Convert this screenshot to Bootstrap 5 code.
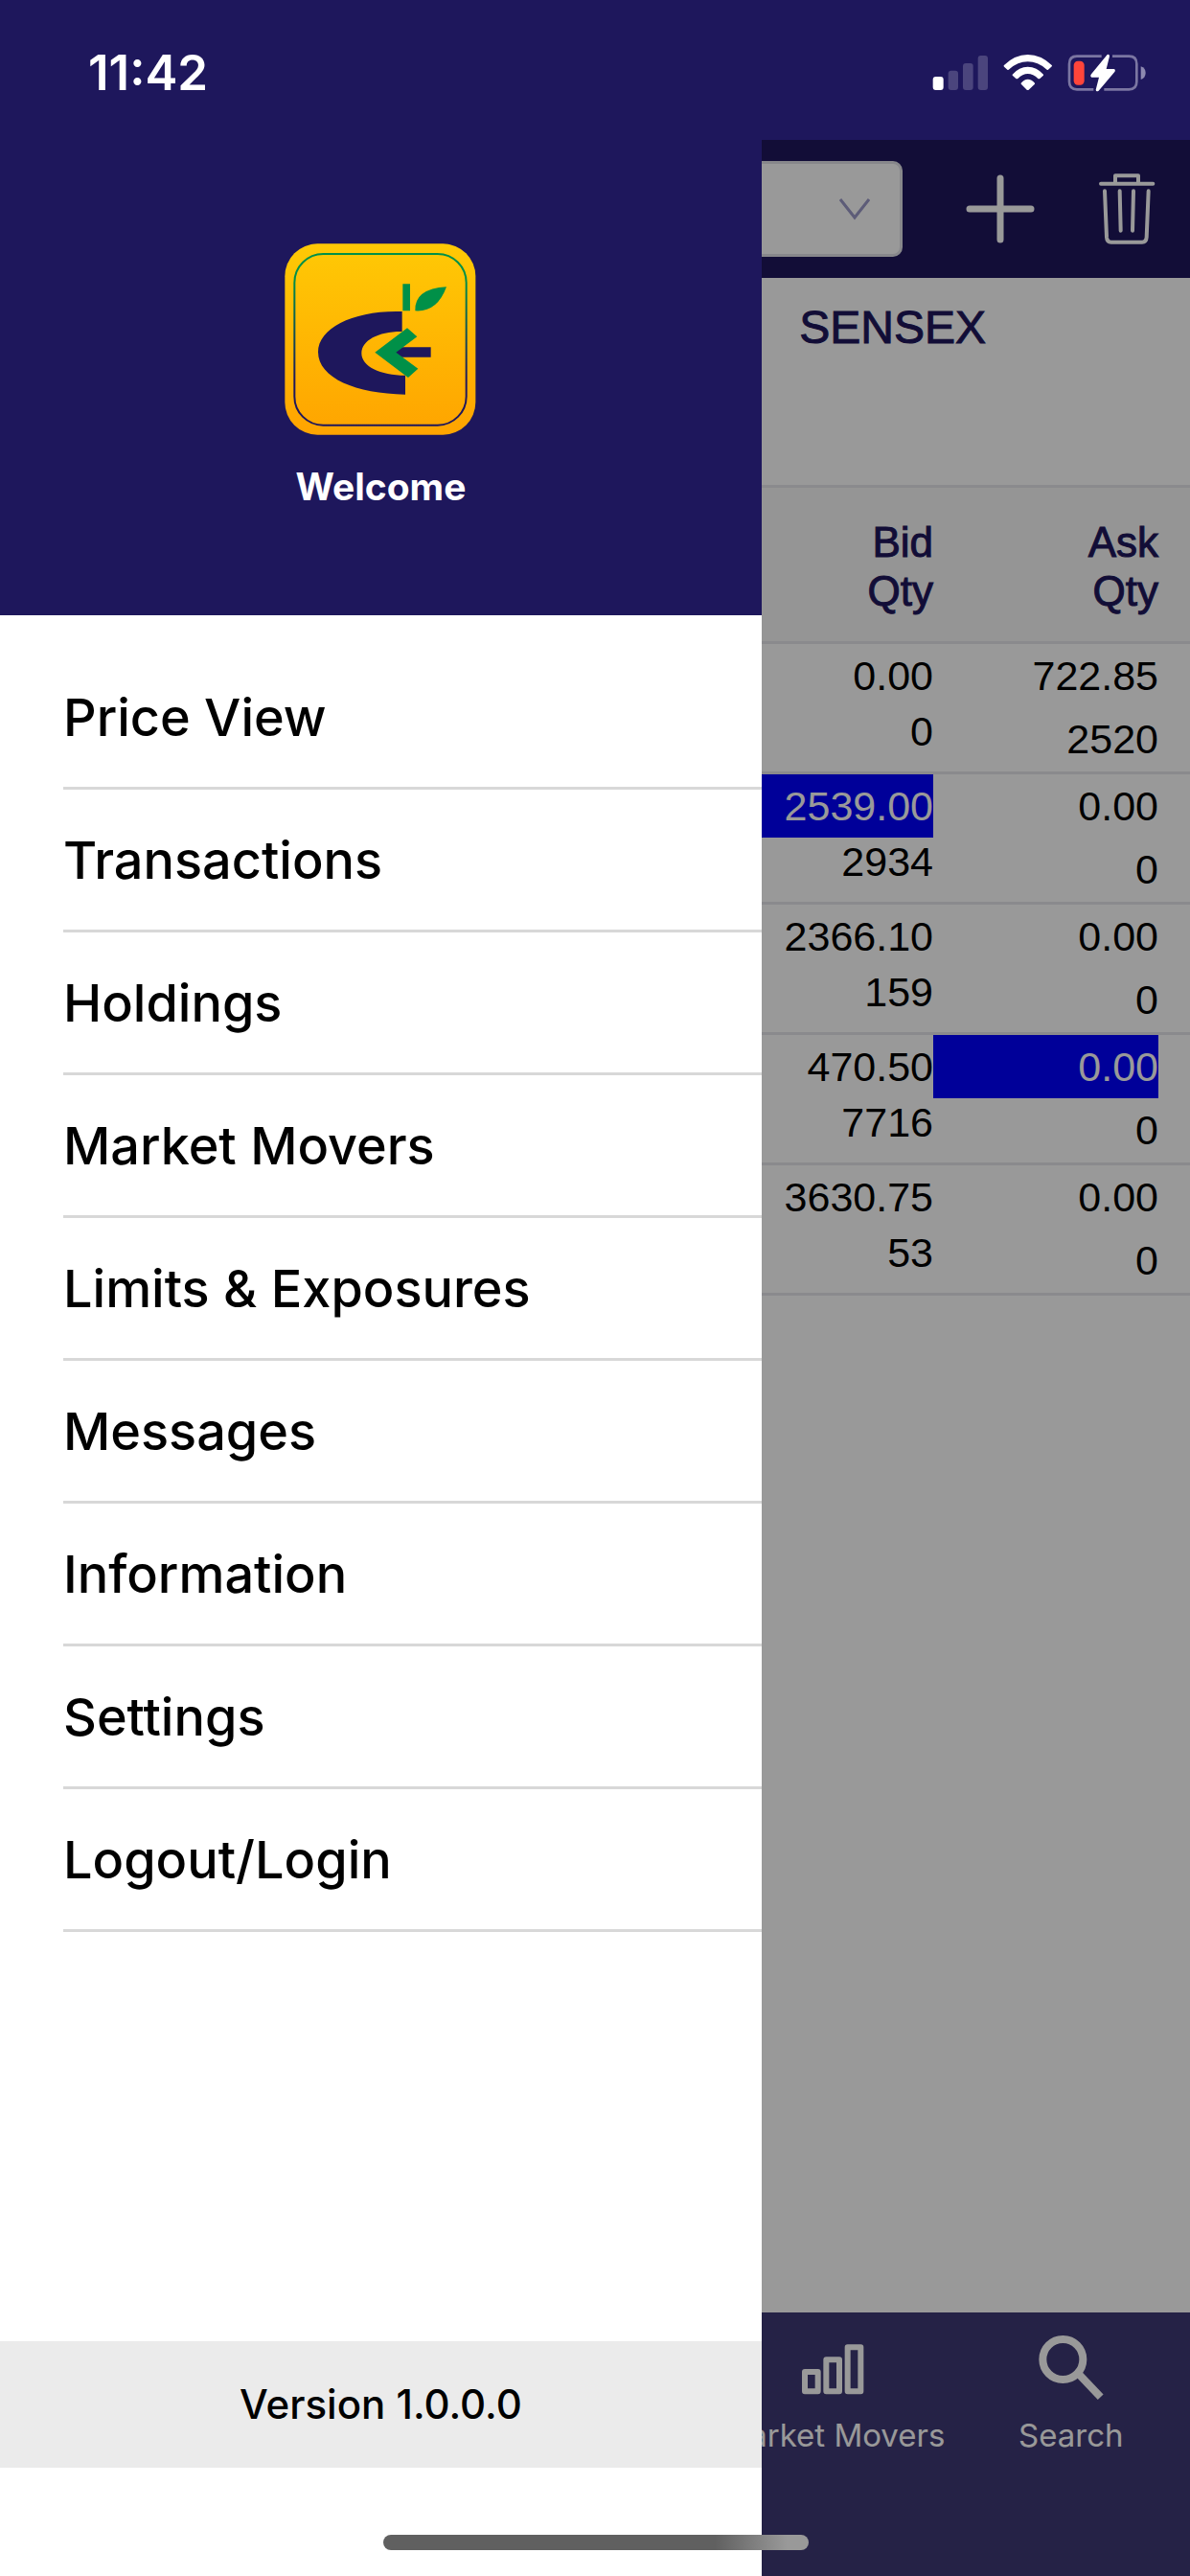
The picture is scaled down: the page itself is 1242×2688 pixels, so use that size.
<!DOCTYPE html>
<html lang="en">
<head>
<meta charset="utf-8">
<meta name="viewport" content="width=device-width, initial-scale=1">
<title>Price View</title>
<link href="https://cdn.jsdelivr.net/npm/bootstrap@5.3.0/dist/css/bootstrap.min.css" rel="stylesheet">
<style>
  :root { --navy: #1e175c; --rule: #e7e7eb; }
  body { font-family: "Liberation Sans", Arial, sans-serif; color: #000; background: #fff; }
  svg { display: block; flex: none; }
  .ui-font { font-family: Inter, "Noto Sans", sans-serif; }

  .status-bar { height: 146px; padding: 6px 45px 0 92px; background: var(--navy); z-index: 3; }
  .status-time { font-size: 51px; line-height: 60px; font-weight: 600; }

  .app-toolbar { height: 144px; padding: 0 36px 0 100px; gap: 66px; background: var(--navy); }
  .list-picker { height: 100px; border: 3px solid #e1e1e8; border-radius: 10px; background: #fff none; }
  .picker-arrow { top: 38px; right: 34px; pointer-events: none; }

  .index-strip { height: 216px; padding: 22px 213px 0 0; font-size: 48px; line-height: 60px; color: var(--navy); -webkit-text-stroke: 1px var(--navy); }

  .quotes { font-size: 43px; line-height: 51px; border-collapse: separate; border-spacing: 0; }
  .quotes th, .quotes td { padding: 0; border-bottom: 3px solid var(--rule); text-align: right; vertical-align: top; }
  .quotes td { height: 136px; }
  .quotes th { padding: 31px 0 27px; border-top: 3px solid var(--rule); background: #f8f8f8; color: var(--navy); font-weight: 400; font-size: 44px; -webkit-text-stroke: 1px var(--navy); }
  .quotes th:last-child, .quotes td:last-child { width: 268px; padding-right: 33px; }
  .quote-line { height: 66px; padding-top: 8px; width: 235px; margin-left: auto; }
  .quote-tail { height: 51px; }
  .tick { background: #00f; color: #fff; }

  .tab-strip { height: 275px; background: #3f3a75; }
  .tab-link { width: 20%; padding-top: 16px; font-size: 33px; line-height: 40px; color: #fff; text-decoration: none; white-space: nowrap; }
  .scrim { background: rgba(0, 0, 0, .4); }

  .drawer { width: 64%; z-index: 2; background: #fff; }
  .drawer-head { height: 642px; padding-top: 254px; background: var(--navy); }
  .drawer-welcome { margin-top: 30px; font-size: 39px; line-height: 48px; font-weight: 700; }
  .drawer-menu { padding: 33px 0 0 66px; }
  .drawer-menu a { display: block; padding: 39px 0 37px; font-size: 54px; line-height: 70px; font-weight: 500; color: #000; text-decoration: none; border-bottom: 3px solid #d8d8d8; white-space: nowrap; }
  .drawer-version { padding: 36px 0; margin-bottom: 113px; font-size: 42px; line-height: 60px; font-weight: 500; background: #ebebeb; }
  .home-bar { z-index: 4; bottom: 27px; left: 50%; width: 444px; height: 16px; margin-left: -221px; border-radius: 8px; background: linear-gradient(90deg, #606060 78%, #999 95%); }
</style>
<script src="https://cdn.jsdelivr.net/npm/bootstrap@5.3.0/dist/js/bootstrap.bundle.min.js"></script>
</head>
<body>
<div class="position-relative d-flex flex-column min-vh-100 overflow-hidden">

  <header class="status-bar ui-font position-relative d-flex align-items-center justify-content-between text-white">
    <div class="status-time">11:42</div>
    <svg width="224" height="40" viewBox="577 168 672 120" role="img" aria-label="Signal, Wi-Fi and battery status">
      <rect x="579" y="240" width="33" height="42" rx="9" fill="#fff"/>
      <g fill="#4b457d"><rect x="627" y="221" width="31" height="61" rx="9"/><rect x="673" y="198" width="32" height="84" rx="9"/><rect x="720" y="174" width="31" height="108" rx="9"/></g>
      <g fill="#fff">
        <path d="M801 205Q835 171 876 171Q918 171 952 205Q952 208 949 210L940 218Q937 220 934 217Q908 193 876 193Q844 193 818 217Q815 220 812 218L803 210Q800 208 801 205Z"/>
        <path d="M828 233Q849 209 876 209Q904 209 925 233Q926 235 924 237L914 246Q911 248 908 246Q893 231 876 231Q860 231 845 246Q842 248 839 246L829 237Q827 235 828 233Z"/>
        <path d="M855 260Q865 248 876 248Q888 248 898 260Q899 262 897 264L879 281Q876 283 873 281L856 264Q854 262 855 260Z"/>
      </g>
      <path d="M1107 176H1030Q1006 176 1006 200V256Q1006 280 1030 280H1082M1141 176H1193Q1217 176 1217 200V256Q1217 280 1193 280H1115" fill="none" stroke="#7b76a2" stroke-width="8"/>
      <path d="M1230 208Q1245 213 1245 228Q1245 244 1230 249Z" fill="#8d89b0"/>
      <rect x="1020" y="191" width="33" height="75" rx="13" fill="#ff453a"/>
      <path d="M1125 171Q1132 169 1132 176L1122 216H1146Q1152 218 1148 225L1098 284Q1090 289 1089 281L1099 242H1076Q1070 239 1075 232Z" fill="#fff"/>
    </svg>
  </header>

  <main class="position-relative flex-grow-1 d-flex flex-column">
    <div class="app-toolbar d-flex align-items-center">
      <div class="position-relative flex-grow-1">
        <select class="form-select list-picker" aria-label="Watch list"><option></option></select>
        <svg class="picker-arrow position-absolute" width="32" height="24" viewBox="0 0 32 24" aria-hidden="true"><path d="M1 2L16 21L31 2" fill="none" stroke="#9b99c8" stroke-width="3"/></svg>
      </div>
      <button type="button" class="btn p-0 border-0" aria-label="Add">
        <svg width="72" height="72" viewBox="0 0 72 72"><path d="M36 4V68M4 36H68" stroke="#fff" stroke-width="7" stroke-linecap="round"/></svg>
      </button>
      <button type="button" class="btn p-0 border-0" aria-label="Delete">
        <svg width="60" height="74" viewBox="1098 545 180 222" fill="none" stroke="#fff" stroke-width="12" stroke-linecap="round" stroke-linejoin="round"><path d="M1107 577H1270M1152 574V552H1224V574M1119 600L1125 745Q1126 760 1139 760H1236Q1249 760 1250 745L1256 600M1166 600L1169 724M1209 600L1206 724"/></svg>
      </button>
    </div>

    <div class="index-strip text-end">SENSEX</div>

    <table class="quotes w-100">
      <thead><tr><th scope="col">Bid<br>Qty</th><th scope="col">Ask<br>Qty</th></tr></thead>
      <tbody>
        <tr><td><div class="quote-line">0.00</div><div class="quote-tail">0</div></td><td><div class="quote-line">722.85</div><div class="quote-line">2520</div></td></tr>
        <tr><td><div class="quote-line tick">2539.00</div><div class="quote-tail">2934</div></td><td><div class="quote-line">0.00</div><div class="quote-line">0</div></td></tr>
        <tr><td><div class="quote-line">2366.10</div><div class="quote-tail">159</div></td><td><div class="quote-line">0.00</div><div class="quote-line">0</div></td></tr>
        <tr><td><div class="quote-line">470.50</div><div class="quote-tail">7716</div></td><td><div class="quote-line tick">0.00</div><div class="quote-line">0</div></td></tr>
        <tr><td><div class="quote-line">3630.75</div><div class="quote-tail">53</div></td><td><div class="quote-line">0.00</div><div class="quote-line">0</div></td></tr>
      </tbody>
    </table>

    <nav class="tab-strip ui-font mt-auto d-flex justify-content-end" aria-label="Tabs">
      <a href="#movers" class="tab-link d-flex flex-column align-items-center">
        <svg class="mb-3 mt-2" width="68" height="68" viewBox="166 136 204 204" fill="none" stroke="#fff" stroke-width="18" stroke-linejoin="round"><path d="M181 250H222V311H181ZM248 212H289V311H248ZM315 173H356V311H315Z"/></svg>
        <span>Market Movers</span>
      </a>
      <a href="#search" class="tab-link d-flex flex-column align-items-center">
        <svg class="mb-3 mt-2" width="68" height="68" viewBox="908 138 204 204" overflow="visible" fill="none" stroke="#fff"><circle cx="984" cy="213" r="63" stroke-width="24"/><path d="M1035 260L1102 331" stroke-width="24"/></svg>
        <span>Search</span>
      </a>
    </nav>
    <div class="scrim position-absolute top-0 start-0 w-100 h-100"></div>
  </main>

  <aside class="drawer ui-font position-absolute top-0 start-0 h-100 d-flex flex-column">
    <div class="drawer-head d-flex flex-column align-items-center text-white">
      <svg width="200" height="200" viewBox="83 71 600 600" role="img" aria-label="App logo">
        <defs>
          <linearGradient id="gold" x1="0" y1="0" x2="0" y2="1"><stop offset="0" stop-color="#ffc905"/><stop offset="1" stop-color="#ffa400"/></linearGradient>
          <linearGradient id="frame" gradientUnits="userSpaceOnUse" x1="0" y1="180" x2="0" y2="500"><stop offset="0" stop-color="#009048"/><stop offset="1" stop-color="#1e175c"/></linearGradient>
        </defs>
        <rect x="84" y="72" width="597" height="598" rx="102" fill="url(#gold)"/>
        <rect x="114" y="104" width="538" height="536" rx="90" fill="none" stroke="url(#frame)" stroke-width="6"/>
        <path d="M451 284V347C378 346 324 374 324 415C324 455 382 484 461 484V544C307 542 188 493 188 411C188 334 303 279 451 284ZM430 396H541V427H430Z" fill="#1e175c"/>
        <path d="M453 198H476V282H453ZM492 282Q489 213 590 207Q561 287 492 282ZM467 336L498 363L432 412L501 463L470 491L366 412Z" fill="#009048"/>
      </svg>
      <div class="drawer-welcome">Welcome</div>
    </div>
    <nav class="drawer-menu" aria-label="Main menu">
      <a href="#price-view">Price View</a>
      <a href="#transactions">Transactions</a>
      <a href="#holdings">Holdings</a>
      <a href="#market-movers">Market Movers</a>
      <a href="#limits">Limits &amp; Exposures</a>
      <a href="#messages">Messages</a>
      <a href="#information">Information</a>
      <a href="#settings">Settings</a>
      <a href="#login">Logout/Login</a>
    </nav>
    <div class="drawer-version mt-auto text-center">Version 1.0.0.0</div>
  </aside>
  <div class="home-bar position-absolute"></div>
</div>
</body>
</html>
